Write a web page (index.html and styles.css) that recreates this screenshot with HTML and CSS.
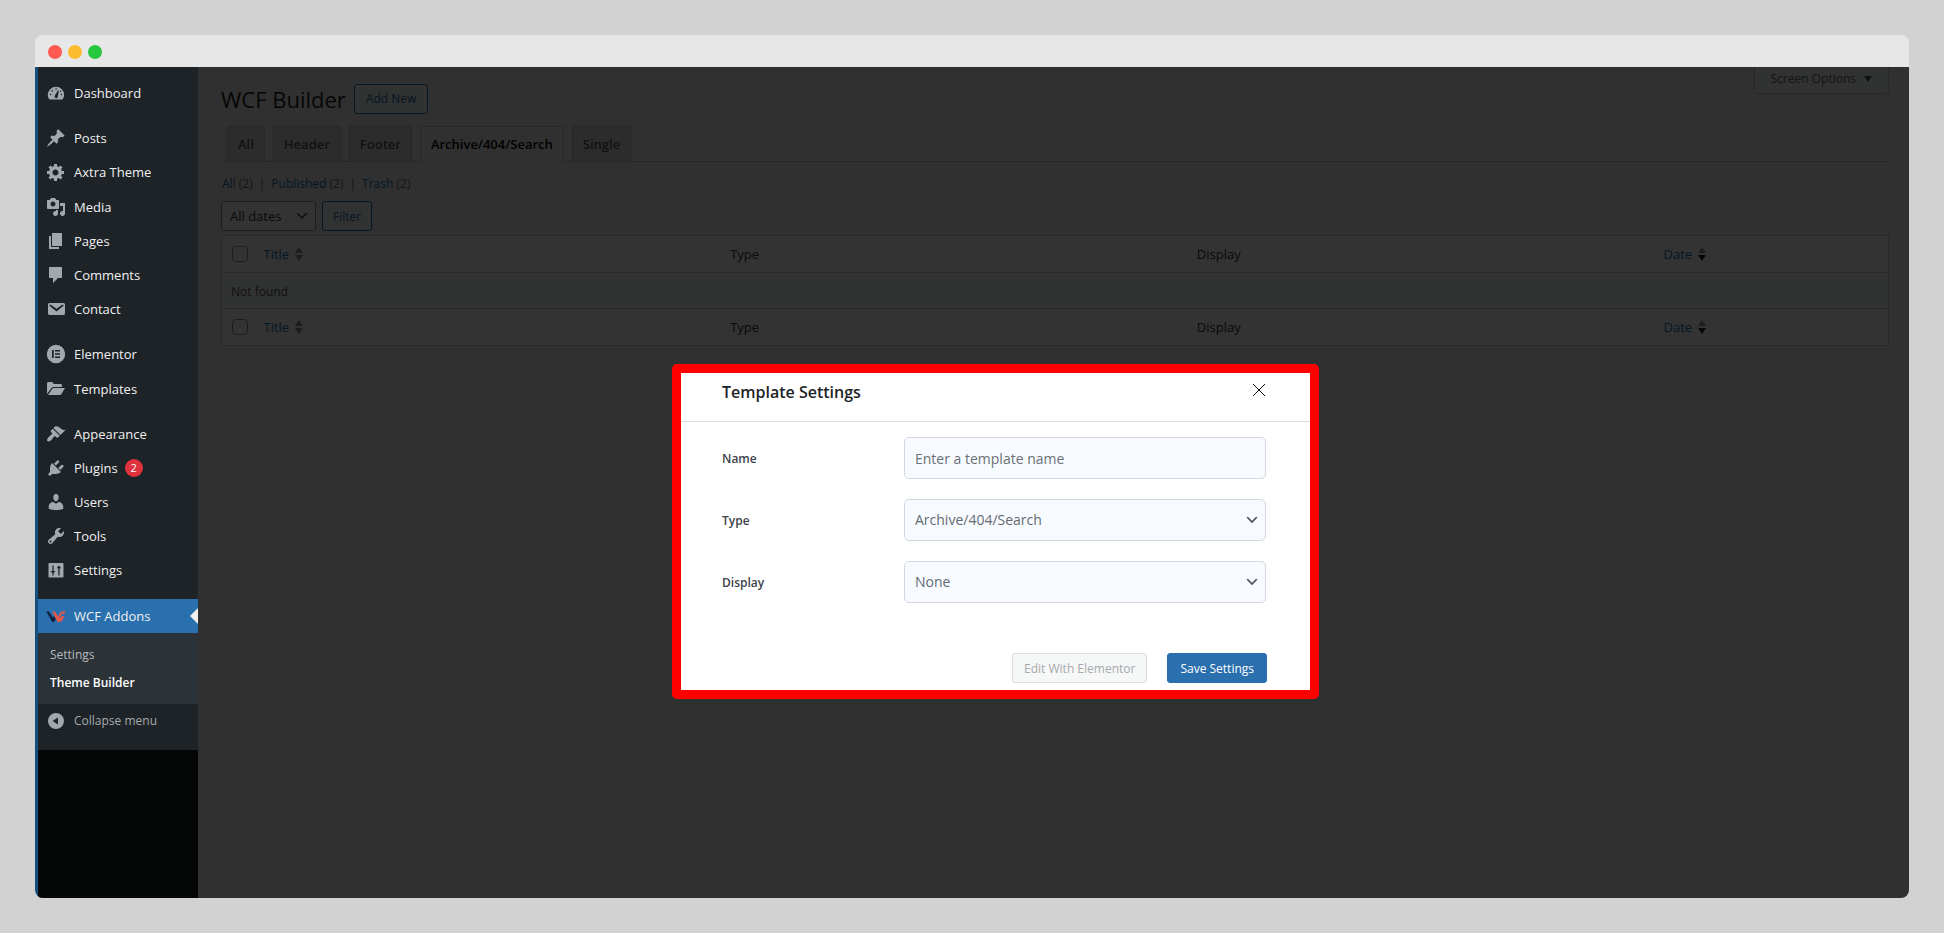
FILE: index.html
```html
<!DOCTYPE html>
<html lang="en">
<head>
<meta charset="utf-8">
<title>WCF Builder</title>
<link rel="stylesheet" href="styles.css">
</head>
<body>
<div class="window">
  <div class="titlebar"><span class="dot red"></span><span class="dot amber"></span><span class="dot green"></span></div>
  <div class="screen">
    <div class="sidebar">
      <nav class="menu">
        <ul class="group">
          <li><a href="#"><svg class="icon" viewBox="0 0 20 20"><path fill-rule="evenodd" d="M3.500 16.500h13A8.200 8.200 0 0 0 18.200 12a8.200 8.200 0 1 0-16.400 0c0 1.700.6 3.200 1.700 4.500zM9.300 6a.8.8 0 1 1 1.600 0 .8.8 0 0 1-1.600 0zM5.500 7.900a.8.8 0 1 1 1.600 0 .8.8 0 0 1-1.600 0zM12 7.200l.9.300-1.100 5.900a1.600 1.600 0 1 1-2.900-.8zM3.800 11.500a.8.8 0 1 1 1.600 0 .8.8 0 0 1-1.600 0zM14.600 11.500a.8.8 0 1 1 1.600 0 .8.8 0 0 1-1.600 0zM13.900 8.300a.7.7 0 1 1 1.400 0 .7.7 0 0 1-1.400 0z"/></svg>Dashboard</a></li>
        </ul>
        <ul class="group">
          <li><a href="#"><svg class="icon" viewBox="0 0 20 20"><path d="M10.440 3.020l1.820-1.820 6.360 6.350-1.830 1.820c-1.050-.68-2.480-.57-3.410.36l-.75.75c-.92.93-1.040 2.350-.35 3.410l-1.830 1.820-2.410-2.410-2.800 2.790c-.42.42-3.380 2.710-3.800 2.290s1.860-3.390 2.280-3.810l2.790-2.790L4.100 9.360l1.830-1.820c1.050.69 2.480.57 3.400-.36l.75-.75c.93-.92 1.050-2.350.36-3.410z"/></svg>Posts</a></li>
          <li class="tall"><a href="#"><svg class="icon" viewBox="0 0 20 20"><path d="M18 12h-2.180c-.17.7-.44 1.350-.81 1.930l1.540 1.540-2.100 2.100-1.540-1.540c-.58.36-1.230.63-1.910.79V19H8v-2.180c-.68-.16-1.330-.43-1.910-.79l-1.540 1.540-2.120-2.120 1.540-1.540c-.36-.58-.63-1.230-.79-1.910H1V9.030h2.170c.16-.7.44-1.350.8-1.940L2.430 5.550l2.100-2.100 1.540 1.540c.58-.37 1.240-.64 1.930-.81V2h3v2.180c.68.16 1.330.43 1.910.79l1.540-1.540 2.120 2.120-1.540 1.540c.36.59.64 1.240.8 1.940H18V12zm-8.500 1.500c1.660 0 3-1.340 3-3s-1.340-3-3-3-3 1.340-3 3 1.340 3 3 3z"/></svg>Axtra Theme</a></li>
          <li><a href="#"><svg class="icon" viewBox="0 0 20 20"><path d="M13 11V4c0-.55-.45-1-1-1h-1.670L9 1H5L3.670 3H2c-.55 0-1 .45-1 1v7c0 .55.45 1 1 1h10c.55 0 1-.45 1-1zM7 4.500c1.380 0 2.500 1.120 2.500 2.500S8.380 9.500 7 9.500 4.500 8.380 4.500 7 5.620 4.500 7 4.500zM14 6h5v10.500c0 1.380-1.120 2.500-2.500 2.500S14 17.880 14 16.500s1.120-2.500 2.500-2.500c.17 0 .34.02.5.05V9h-3V6zm-4 8.050V13h2v3.500c0 1.380-1.120 2.500-2.500 2.500S7 17.880 7 16.500 8.120 14 9.500 14c.17 0 .34.02.5.05z"/></svg>Media</a></li>
          <li><a href="#"><svg class="icon" viewBox="0 0 20 20"><path d="M6 15V2h10v13H6zm-1 1h8v2H3V5h2v11z"/></svg>Pages</a></li>
          <li><a href="#"><svg class="icon" viewBox="0 0 20 20"><path d="M4 2h11c.6 0 1 .4 1 1v9c0 .6-.4 1-1 1h-3l-5 5v-5H4c-.6 0-1-.4-1-1V3c0-.6.4-1 1-1z"/></svg>Comments</a></li>
          <li><a href="#"><svg class="icon" viewBox="0 0 20 20"><path d="M3.870 4h13.250C18.370 4 19 4.590 19 5.790v8.420c0 1.190-.63 1.790-1.880 1.790H3.870c-1.250 0-1.880-.6-1.880-1.790V5.790c0-1.200.63-1.790 1.880-1.790zm6.620 8.600l6.740-5.530c.24-.2.43-.66.13-1.070-.29-.41-.82-.42-1.170-.17l-5.700 3.860L4.800 5.830c-.35-.25-.88-.24-1.170.17-.3.41-.11.87.13 1.070z"/></svg>Contact</a></li>
        </ul>
        <ul class="group">
          <li class="tall"><a href="#"><svg class="icon" viewBox="0 0 20 20"><path fill-rule="evenodd" d="M10 .8a9.200 9.200 0 1 0 0 18.400A9.200 9.200 0 0 0 10 .8zM6 6h1.700v8H6zM9 6h5v1.600H9zM9 9.200h5v1.600H9zM9 12.400h5V14H9z"/></svg>Elementor</a></li>
          <li><a href="#"><svg class="icon" viewBox="0 0 20 20"><path d="M1 15V4.500C1 3.600 1.600 3 2.500 3H6l2 2h6.500c.9 0 1.500.6 1.500 1.500V8H7.500c-.8 0-1.500.4-2 1.100zM2 16l4.300-6.300c.3-.5.700-.7 1.300-.7H19l-3.700 6.200c-.3.500-.7.8-1.300.8z"/></svg>Templates</a></li>
        </ul>
        <ul class="group">
          <li><a href="#"><svg class="icon" viewBox="0 0 20 20"><path d="M14.480 11.060L7.410 3.990l1.500-1.500c.5-.56 2.300-.47 3.510.32 1.210.8 1.430 1.280 2.910 2.100 1.180.64 2.450 1.260 4.450.85zm-.71.71L6.700 4.700 4.930 6.470c-.39.39-.39 1.020 0 1.410l1.060 1.060c.39.39.39 1.030 0 1.420-.6.6-1.430 1.110-2.210 1.690-.35.26-.7.53-1.010.84C1.430 14.230.4 16.080 1.400 17.070c.99 1 2.840-.03 4.180-1.360.31-.31.58-.66.85-1.020.57-.78 1.080-1.610 1.690-2.210.39-.39 1.020-.39 1.410 0l1.060 1.060c.39.39 1.020.39 1.410 0z"/></svg>Appearance</a></li>
          <li><a href="#"><svg class="icon" viewBox="0 0 20 20"><path d="M13.110 4.360L9.870 7.600 8 5.730l3.240-3.240c.35-.34 1.050-.2 1.560.32.52.51.66 1.210.31 1.550zm-8 1.770l.91-1.120 9.010 9.010-1.190.84c-.71.71-2.630 1.160-3.820 1.160H6.140L4.900 17.260c-.59.59-1.540.59-2.120 0-.59-.58-.59-1.530 0-2.120l1.240-1.240v-3.880c0-1.130.4-3.190 1.090-3.890zm7.260 3.970l3.240-3.240c.34-.35 1.040-.21 1.550.31.52.51.66 1.210.31 1.550l-3.240 3.250z"/></svg>Plugins<span class="badge">2</span></a></li>
          <li><a href="#"><svg class="icon" viewBox="0 0 20 20"><path d="M10 9.250c-2.270 0-2.730-3.440-2.730-3.440C7 4.020 7.820 2 9.970 2c2.160 0 2.980 2.020 2.710 3.810 0 0-.41 3.440-2.680 3.440zm0 2.570L12.720 10c2.390 0 4.520 2.330 4.520 4.530v2.490s-3.650 1.130-7.240 1.130c-3.650 0-7.240-1.130-7.240-1.130v-2.490c0-2.250 1.940-4.480 4.470-4.480z"/></svg>Users</a></li>
          <li><a href="#"><svg class="icon" viewBox="0 0 20 20"><path d="M16.680 9.770c-1.340 1.340-3.300 1.670-4.950.99l-5.410 6.520c-.99.99-2.590.99-3.580 0s-.99-2.590 0-3.570l6.520-5.420c-.68-1.650-.35-3.610.99-4.950 1.280-1.280 3.120-1.620 4.720-1.060l-2.890 2.890 2.820 2.820 2.860-2.870c.53 1.580.18 3.390-1.080 4.650zM3.810 16.210c.4.39 1.040.39 1.430 0 .4-.4.4-1.040 0-1.430-.39-.4-1.030-.4-1.430 0-.39.39-.39 1.030 0 1.430z"/></svg>Tools</a></li>
          <li><a href="#"><svg class="icon" viewBox="0 0 20 20"><path fill-rule="evenodd" d="M3.500 3h13c.6 0 1 .4 1 1v12.500c0 .6-.4 1-1 1h-13c-.6 0-1-.4-1-1V4c0-.6.4-1 1-1zM6.400 5.500h1.200v5.500h2L7.600 13v2.500H6.400V13l-2-2h2zM12.900 5.500L15.200 8.300h-1.600v7.200h-1.300V8.300h-1.700z"/></svg>Settings</a></li>
        </ul>
        <ul class="group">
          <li class="current"><a href="#"><svg class="icon" viewBox="0 0 20 20"><path fill="#10213f" d="M.3 5.500h2.600l3.900 6 1.200-1.600 1.900 3.200-1.900 2.900H6.300z"/><path fill="#e2574c" d="M6.300 5.500H9l3 4.800 2.300-3.600c.5-.8 1-1.200 2-1.200h3.500l-1.400 2.300h-2.600l-2.300 3.600 1.400.1.900-1.500h2.900l-2 3.600c-.8 1.500-1.500 2.400-3.400 2.400h-1.800z"/></svg>WCF Addons</a></li>
        </ul>
        <ul class="submenu">
          <li><a href="#">Settings</a></li>
          <li><a href="#" class="on">Theme Builder</a></li>
        </ul>
        <button class="collapse" type="button"><svg class="icon" viewBox="0 0 20 20"><path fill-rule="evenodd" d="M10 2a8 8 0 1 0 0 16 8 8 0 0 0 0-16zm2 4.500v7L6.500 10z"/></svg>Collapse menu</button>
      </nav>
    </div>
    <main class="main">
      <header class="head">
        <h1>WCF Builder</h1>
        <button class="btn" type="button">Add New</button>
        <button class="options" type="button">Screen Options <span class="caret"></span></button>
      </header>
      <nav class="tabs">
        <a href="#">All</a><a href="#">Header</a><a href="#">Footer</a><a href="#" class="active">Archive/404/Search</a><a href="#">Single</a>
      </nav>
      <ul class="views">
        <li><a href="#">All</a> (2)</li><li>|</li><li><a href="#">Published</a> (2)</li><li>|</li><li><a href="#">Trash</a> (2)</li>
      </ul>
      <form class="filters">
        <div class="pick">
          <select aria-label="Filter by date"><option>All dates</option></select>
          <svg class="chev" viewBox="0 0 20 20"><path d="M5 6l5 5 5-5 2 1-7 7-7-7 2-1z"/></svg>
        </div>
        <button class="btn" type="button">Filter</button>
      </form>
      <table class="list">
        <thead>
          <tr><td class="check"><input type="checkbox" aria-label="Select all"></td><th><a href="#">Title<span class="sort"></span></a></th><th>Type</th><th>Display</th><th class="date"><a href="#">Date<span class="sort desc"></span></a></th></tr>
        </thead>
        <tbody>
          <tr><td colspan="5">Not found</td></tr>
        </tbody>
        <tfoot>
          <tr><td class="check"><input type="checkbox" aria-label="Select all"></td><th><a href="#">Title<span class="sort"></span></a></th><th>Type</th><th>Display</th><th class="date"><a href="#">Date<span class="sort desc"></span></a></th></tr>
        </tfoot>
      </table>
    </main>
    <div class="overlay">
      <section class="modal" role="dialog" aria-labelledby="modal-title">
        <header class="modal-head">
          <h2 id="modal-title">Template Settings</h2>
          <button class="close" type="button" aria-label="Close"><svg viewBox="0 0 12 12"><path d="M0 0l12 12M12 0L0 12"/></svg></button>
        </header>
        <form class="fields">
          <label for="name">Name</label>
          <input id="name" type="text" placeholder="Enter a template name">
          <label for="type">Type</label>
          <div class="pick">
            <select id="type"><option>Archive/404/Search</option></select>
            <svg class="chev" viewBox="0 0 20 20"><path d="M5 6l5 5 5-5 2 1-7 7-7-7 2-1z"/></svg>
          </div>
          <label for="display">Display</label>
          <div class="pick">
            <select id="display"><option>None</option></select>
            <svg class="chev" viewBox="0 0 20 20"><path d="M5 6l5 5 5-5 2 1-7 7-7-7 2-1z"/></svg>
          </div>
        </form>
        <footer class="modal-foot">
          <button class="btn" type="button" disabled>Edit With Elementor</button>
          <button class="btn primary" type="button">Save Settings</button>
        </footer>
      </section>
    </div>
  </div>
</div>
</body>
</html>
```
FILE: styles.css
```css
* {
  box-sizing: border-box;
}

body {
  margin: 0;
  min-height: 100vh;
  padding: 35px;
  display: flex;
  background: #d2d2d2;
  font-family: "Open Sans", "Noto Sans", sans-serif;
  font-size: 12px;
  line-height: 20px;
  color: #3c434a;
}

ul {
  margin: 0;
  padding: 0;
  list-style: none;
}

a {
  color: #2271b1;
  text-decoration: none;
}

button,
input,
select {
  font: inherit;
  color: inherit;
}

.window {
  flex: 1;
  display: flex;
  flex-direction: column;
  border-radius: 8px;
  overflow: hidden;
}

.titlebar {
  display: flex;
  align-items: center;
  gap: 6px;
  height: 32px;
  padding: 2px 13px 0;
  background: #e7e7e7;
}

.dot {
  width: 14px;
  height: 14px;
  border-radius: 50%;
}

.red { background: #ff5a52; }
.amber { background: #fdbc2f; }
.green { background: #27c83f; }

.screen {
  flex: 1;
  position: relative;
  display: flex;
  border-left: 3px solid #134e7c;
  background: #f0f0f1;
}

/* Admin menu */
.sidebar {
  width: 160px;
  background: #1d2327;
}

.menu {
  position: relative;
  z-index: 2;
  padding: 9px 0 12px;
  background: #1d2327;
  font-size: 13px;
}

.group + .group {
  margin-top: 11px;
}

.menu a,
.collapse {
  display: flex;
  align-items: center;
  width: 100%;
  height: 34px;
  padding: 0 8px;
  color: #f0f0f1;
}

.tall {
  padding-bottom: 1px;
}

.icon {
  width: 20px;
  height: 20px;
  margin-right: 8px;
  fill: #a2a8ae;
}

.badge {
  width: 18px;
  height: 18px;
  margin-left: 7px;
  border-radius: 50%;
  background: #e0323c;
  color: #fff;
  font-size: 11px;
  line-height: 18px;
  text-align: center;
}

.current {
  position: relative;
  margin-top: 12px;
  background: #2a6fae;
}

.current::after {
  content: "";
  position: absolute;
  right: 0;
  top: 9px;
  border: 8px solid transparent;
  border-left: 0;
  border-right-color: #f0f0f1;
}

.menu .submenu {
  padding: 8px 0 7px;
  background: #2c3338;
  font-size: 12px;
}

.menu .submenu a {
  height: 28px;
  padding: 0 12px;
  color: #b6b9bc;
}

.menu .submenu .on {
  color: #fff;
  font-weight: 600;
}

.collapse {
  border: 0;
  background: none;
  color: #a7aaad;
  font-size: 12px;
}

/* Page */
.main {
  flex: 1;
  min-width: 0;
  padding: 0 20px 0 23px;
}

.head {
  display: flex;
  align-items: center;
  gap: 8px;
  height: 59px;
  padding-top: 4px;
}

h1 {
  margin: 0;
  color: #1d2327;
  font-size: 22px;
  font-weight: 400;
  line-height: 30px;
}

.btn {
  height: 30px;
  padding: 1px 11px 0;
  border: 1px solid #2271b1;
  border-radius: 3px;
  background: #f6f7f7;
  color: #2271b1;
  white-space: nowrap;
}

.options {
  display: flex;
  align-items: center;
  gap: 8px;
  align-self: flex-start;
  height: 27px;
  margin: -4px 0 0 auto;
  padding: 0 16px 2px;
  border: 1px solid #c3c4c7;
  border-top: 0;
  border-radius: 0 0 4px 4px;
  background: #f6f7f7;
  color: #646970;
}

.caret {
  border: 4px solid transparent;
  border-top: 6px solid #50575e;
  border-bottom: 0;
}

.tabs {
  display: flex;
  gap: 8px;
  padding: 0 6px;
  border-bottom: 1px solid #c3c4c7;
  font-size: 13px;
  font-weight: 600;
}

.tabs a {
  height: 35px;
  padding: 0 10px;
  border: 1px solid #c3c4c7;
  border-bottom: 0;
  background: #dcdcde;
  color: #50575e;
  line-height: 35px;
}

.tabs .active {
  height: 36px;
  margin-bottom: -1px;
  background: #f0f0f1;
  color: #000;
}

.views {
  display: flex;
  gap: 6px;
  padding: 12px 1px 7px;
  color: #646970;
}

.filters {
  display: flex;
  gap: 6px;
}

.filters .btn {
  padding: 1px 10px 0;
}

.pick {
  position: relative;
}

.pick select {
  appearance: none;
  width: 100%;
  height: 30px;
  padding: 0 33px 0 8px;
  border: 1px solid #8c8f94;
  border-radius: 3px;
  background: #fff;
  color: #2c3338;
  font-size: 13px;
}

.chev {
  position: absolute;
  right: 6px;
  top: 50%;
  width: 16px;
  height: 16px;
  margin-top: -8px;
  fill: #50575e;
  pointer-events: none;
}

.list {
  width: 100%;
  margin-top: 4px;
  border: 1px solid #cccdd0;
  border-collapse: collapse;
  table-layout: fixed;
  background: #fff;
}

.list tr {
  height: 37px;
}

.list tbody tr,
.list tfoot tr {
  border-top: 1px solid #cccdd0;
}

.list tbody tr {
  height: 36px;
  background: #f6f7f7;
}

.list th,
.list td {
  padding: 0 10px;
  color: #2c3338;
  font-size: 13px;
  font-weight: 400;
  text-align: left;
}

.list tbody td {
  padding: 2px 9px 0;
  color: #50575e;
  font-size: 12px;
}

.list .check {
  width: 32px;
}

.list .date {
  width: 235px;
}

.list input {
  display: block;
  appearance: none;
  width: 16px;
  height: 16px;
  margin: 0;
  border: 1px solid #8c8f94;
  border-radius: 4px;
  background: #fff;
}

.list .check {
  padding: 0 0 0 10px;
}

.list th a {
  display: flex;
  align-items: center;
  gap: 6px;
}

.sort {
  display: flex;
  flex-direction: column;
  gap: 2px;
}

.sort::before,
.sort::after {
  content: "";
  border: 4px solid transparent;
}

.sort::before {
  border-top: 0;
  border-bottom: 6px solid #8c8f94;
}

.sort::after {
  border-bottom: 0;
  border-top: 6px solid #8c8f94;
}

.desc::after {
  border-top-color: #1d2327;
}

/* Dialog */
.overlay {
  position: absolute;
  inset: 0;
  z-index: 1;
  display: flex;
  align-items: flex-start;
  justify-content: center;
  padding: 297px 0 0 44px;
  background: rgba(0, 0, 0, .8);
}

.modal {
  width: 647px;
  border: 9px solid #f00;
  border-radius: 5px;
  background: #fff;
}

.modal-head {
  display: flex;
  align-items: flex-start;
  justify-content: space-between;
  height: 49px;
  padding: 7px 45px 0 41px;
  border-bottom: 1px solid #dcdfe6;
}

h2 {
  margin: 0;
  color: #1d2327;
  font-size: 16px;
  font-weight: 600;
  line-height: 24px;
}

.close {
  display: flex;
  padding: 4px 0;
  border: 0;
  background: none;
}

.close svg {
  width: 12px;
  height: 12px;
  stroke: #111;
  fill: none;
  overflow: visible;
}

.fields {
  display: grid;
  grid-template-columns: 162px 1fr;
  gap: 20px;
  align-items: center;
  padding: 15px 44px 0 41px;
}

.fields label {
  padding-top: 2px;
  font-weight: 600;
}

.fields input,
.fields select {
  width: 100%;
  height: 42px;
  padding: 0 10px;
  border: 1px solid #d3d7df;
  border-radius: 5px;
  background: #f7fbff;
  color: #646970;
  font-size: 14px;
}

.fields input::placeholder {
  color: #6b7075;
}

.modal-foot {
  display: flex;
  justify-content: flex-end;
  gap: 20px;
  padding: 50px 43px 7px;
}

.modal-foot .btn {
  padding: 1px 12px 0;
}

.modal-foot .btn:disabled {
  padding: 1px 11px 0;
  border-color: #dcdcde;
  color: #a7aaad;
}

.modal-foot .primary {
  border-color: #2a6fae;
  background: #2a6fae;
  color: #fff;
}
```
